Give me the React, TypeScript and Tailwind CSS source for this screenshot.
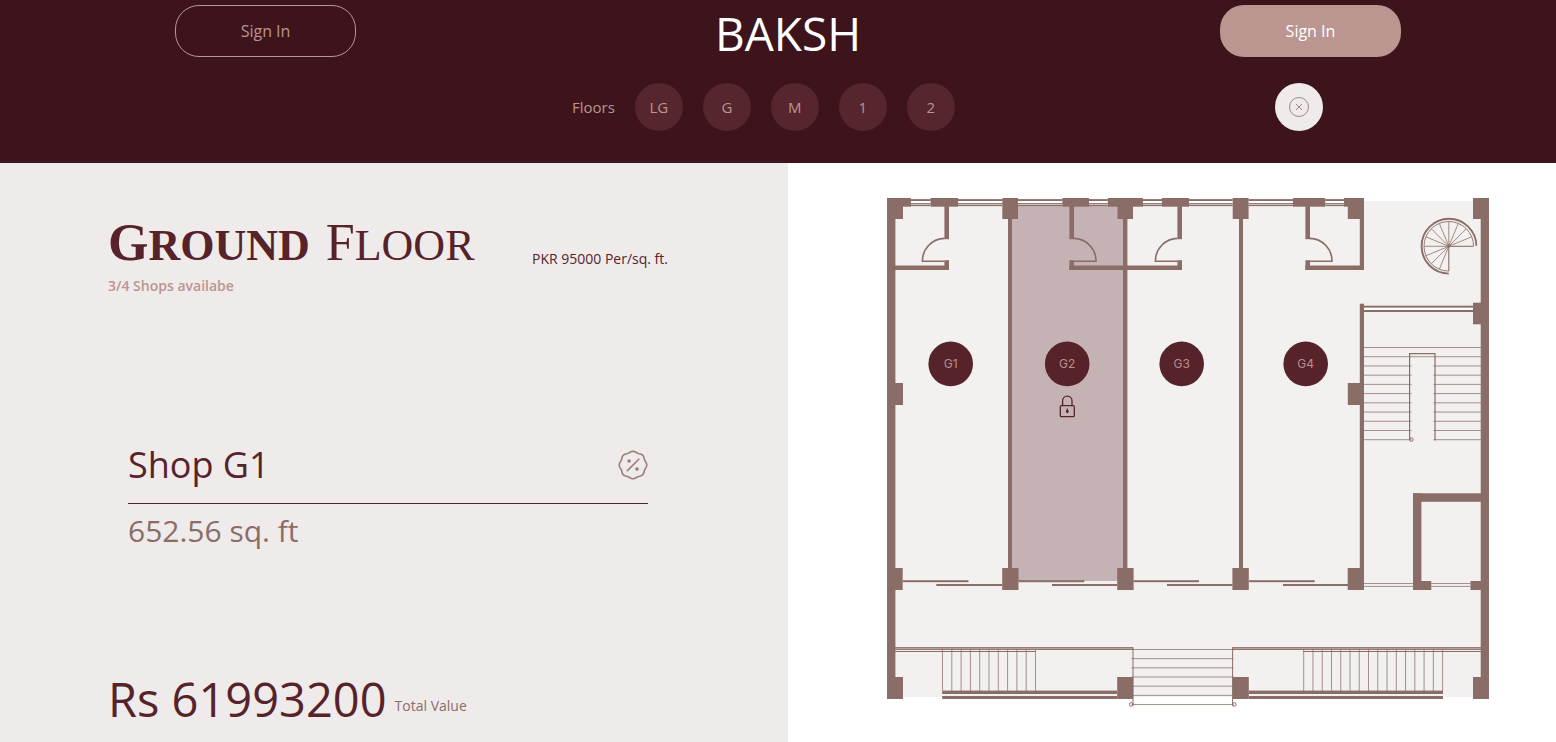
import React from "react";

const WALL = "#8b6d68";

type Box = [x1: number, y1: number, x2: number, y2: number];

const walls: Box[] = [
  // outer walls
  [887, 198, 895.4, 699],
  [1480.7, 198, 1489, 699],
  // top rail
  [887, 198, 911, 206.7],
  [930.5, 198, 958, 206.7],
  [1062.3, 198, 1089, 206.7],
  [1107.7, 198, 1143, 206.7],
  [1162, 198, 1189, 206.7],
  [1293, 198, 1325.3, 206.7],
  [1344, 198, 1364, 206.7],
  // top columns
  [887, 198, 903, 219],
  [1002.3, 198, 1018, 219],
  [1117.5, 198, 1133, 219],
  [1232.7, 198, 1248.6, 219],
  [1347.8, 198, 1364, 219],
  [1473, 198, 1489, 219],
  // shop partitions
  [1008, 219, 1012, 568],
  [1123, 219, 1127.4, 568],
  [1239, 219, 1243, 568],
  [1359.8, 303.7, 1364, 568],
  [1359.8, 206, 1364, 270],
  // washrooms
  [944.4, 206, 949, 239.2],
  [944.4, 260.2, 949, 270],
  [895, 265.5, 949, 270],
  [1069.4, 206, 1074, 239.2],
  [1069.4, 260.2, 1074, 270],
  [1069.4, 265.5, 1182, 270],
  [1177.4, 206, 1182, 239.2],
  [1177.4, 260.2, 1182, 270],
  [1305.4, 206, 1310, 239.2],
  [1305.4, 260.2, 1310, 270],
  [1305.4, 265.5, 1364, 270],
  // middle columns
  [895, 383, 903, 405],
  [1347.8, 383, 1364, 405],
  [1473, 302.7, 1489, 324.3],
  // front columns
  [887, 568, 902.7, 590],
  [1002.2, 568, 1018.5, 590],
  [1117.2, 568, 1133.6, 590],
  [1232.4, 568, 1248.8, 590],
  [1347.7, 568, 1364, 590],
  // lift shaft
  [1413, 493.3, 1421.4, 590],
  [1413, 493.3, 1481, 501.8],
  [1413, 581, 1431.3, 590],
  [1470.5, 581, 1481, 590],
  // porch columns
  [887, 677, 903, 699],
  [1117.2, 677, 1133.2, 699],
  [1232.7, 677, 1248.8, 699],
  [1473, 677, 1489, 699],
  // porch rails
  [942.2, 690.6, 1117.2, 694],
  [942.2, 696, 1117.2, 699],
  [1248.8, 690.6, 1443, 694],
  [1248.8, 696, 1443, 699],
  // landing rails
  [1364, 305.7, 1473, 307.6],
  [1364, 310, 1473, 312],
];

const sliders: Box[] = [
  [903, 580.2, 968.5, 582.2],
  [936.3, 584, 1002, 586],
  [1018.5, 580.2, 1084.3, 582.2],
  [1052, 584, 1117, 586],
  [1133.7, 580.2, 1199, 582.2],
  [1167, 584, 1232.5, 586],
  [1249, 580.2, 1314.7, 582.2],
  [1283, 584, 1348, 586],
];

const windows: [number, number][] = [
  [911, 930.5],
  [958, 1002.3],
  [1018, 1062.3],
  [1089, 1107.7],
  [1143, 1162],
  [1189, 1232.7],
  [1248.6, 1293],
  [1325.3, 1344],
];

const shops = [
  { id: "G1", x: 950.7 },
  { id: "G2", x: 1067.2 },
  { id: "G3", x: 1181.7 },
  { id: "G4", x: 1305.7 },
];

const range = (n: number) => Array.from({ length: n }, (_, i) => i);

function Rects({ boxes }: { boxes: Box[] }) {
  return (
    <>
      {boxes.map(([x1, y1, x2, y2], i) => (
        <rect key={i} x={x1} y={y1} width={x2 - x1} height={y2 - y1} />
      ))}
    </>
  );
}

function Door({ hinge, side }: { hinge: number; side: 1 | -1 }) {
  const end = hinge + side * 22.2;
  return (
    <path
      d={`M${hinge} 238.4A22.6 22.6 0 0 ${side === 1 ? 1 : 0} ${end} 261.3H${hinge}`}
      fill="none"
      stroke={WALL}
      strokeWidth="1.6"
    />
  );
}

function SpiralStair() {
  const cx = 1448.8;
  const cy = 246.3;
  return (
    <g fill="none" stroke={WALL}>
      <path d={`M${cx + 27.6} ${cy - 0.5}A27.4 27.4 0 1 0 ${cx} ${cy + 27.3}`} strokeWidth="1.9" />
      <path d={`M${cx + 24.8} ${cy}A24.8 24.8 0 1 0 ${cx} ${cy + 24.8}`} strokeWidth="0.9" />
      {range(13).map((i) => {
        const a = (i * 22.5 * Math.PI) / 180;
        return (
          <line
            key={i}
            x1={cx}
            y1={cy}
            x2={cx + 24.6 * Math.cos(a)}
            y2={cy - 24.6 * Math.sin(a)}
            strokeWidth={i === 0 || i === 12 ? 1.1 : 0.8}
          />
        );
      })}
      <circle cx={cx} cy={cy} r="1" fill={WALL} />
    </g>
  );
}

function FloorPlan() {
  return (
    <svg viewBox="887 198 602 510" className="block w-full" role="img" aria-label="Ground floor plan">
      <rect x="891" y="201" width="594" height="496" fill="#f3f1f0" />
      <rect x="1012" y="205" width="111" height="376" fill="#c5b2b4" />
      <rect x="1364" y="307" width="109" height="3.5" fill="#fff" />
      {windows.map(([a, b]) => (
        <g key={a}>
          <rect x={a} y="198" width={b - a} height="8" fill="#fff" />
          <rect x={a} y="199.1" width={b - a} height="1.9" fill={WALL} />
          <rect x={a} y="203.1" width={b - a} height="1.2" fill={WALL} />
          <rect x={a} y="204.8" width={b - a} height="1.3" fill={WALL} />
        </g>
      ))}
      <g fill={WALL}>
        <Rects boxes={walls} />
        <Rects boxes={sliders} />
      </g>
      <Door hinge={944.6} side={-1} />
      <Door hinge={1073.8} side={1} />
      <Door hinge={1177.6} side={-1} />
      <Door hinge={1309.8} side={1} />
      <SpiralStair />

      <g fill="none" stroke={WALL} strokeWidth="0.75">
        {range(11).map((i) => {
          const y = 347.5 + i * 9.22;
          return i < 2 ? (
            <path key={i} d={`M1364 ${y}H1481`} />
          ) : (
            <path key={i} d={`M1364 ${y}H1411.5M1433.4 ${y}H1481`} />
          );
        })}
        <path d="M1409.6 440V353.6H1435V440.5" strokeWidth="1.2" />
        <circle cx="1411.4" cy="439.6" r="1.8" strokeWidth="1" />
        <path d="M1364 583.5H1413M1364 586.4H1413M1431.3 583.5H1470.5M1431.3 586.4H1470.5" />
        {range(11).map((i) => (
          <path key={i} d={`M${942.5 + i * 9.3} 649V691`} />
        ))}
        {range(16).map((i) => (
          <path key={i} d={`M${1303.7 + i * 9.26} 649V691`} />
        ))}
        {range(7).map((i) => (
          <path key={i} d={`M1131.5 ${649.5 + i * 9.17}H1233.6`} />
        ))}
      </g>
      <g fill={WALL} fillOpacity="0.45">
        <rect x="895" y="647.3" width="238" height="2.4" />
        <rect x="1232.5" y="647.3" width="248.5" height="2.4" />
      </g>
      <g fill="none" stroke={WALL} strokeWidth="1">
        <path d="M895 647.7H1133M895 649.4H1133M895 651.5H1035.7" />
        <path d="M1232.5 647.7H1481M1232.5 649.4H1481M1303.4 651.5H1481" />
        <path d="M1133 647.3V706M1232.6 647.3V706" />
        <circle cx="1131.2" cy="704.4" r="1.8" />
        <circle cx="1234.3" cy="704.4" r="1.8" />
      </g>

      {shops.map(({ id, x }) => (
        <g key={id}>
          <circle cx={x} cy="363.9" r="22.3" fill="#56232b" />
          <text
            x={x}
            y="368"
            textAnchor="middle"
            fill="#bb8f8a"
            className="font-['Inter',sans-serif] text-[12px]"
          >
            {id}
          </text>
        </g>
      ))}
      <g fill="none" stroke="#56232b" strokeWidth="1.3">
        <rect x="1060.3" y="405.6" width="14" height="11" rx="1.2" />
        <path d="M1062.6 405.6V400.8A4.7 4.7 0 0 1 1072 400.8V405.6" />
        <path d="M1067.3 408.6V413" strokeWidth="1.2" />
        <circle cx="1067.3" cy="411.4" r="0.8" fill="#56232b" />
      </g>
    </svg>
  );
}

function DiscountIcon() {
  const steps = 96;
  const points = range(steps)
    .map((i) => {
      const a = (i / steps) * 2 * Math.PI;
      const r = 13.2 + 0.55 * Math.cos(8 * a);
      return `${(15 + r * Math.sin(a)).toFixed(2)},${(15 - r * Math.cos(a)).toFixed(2)}`;
    })
    .join(" ");
  return (
    <svg
      viewBox="0 0 30 30"
      className="size-[30px] opacity-85"
      fill="none"
      stroke={WALL}
      strokeWidth="1.6"
      strokeLinecap="round"
      aria-hidden="true"
    >
      <polygon points={points} strokeLinejoin="round" />
      <path d="M9.4 20.6L20.8 9.2" />
      <circle cx="11.1" cy="11" r="1" fill={WALL} />
      <circle cx="19" cy="19.1" r="1" fill={WALL} />
    </svg>
  );
}

export default function App() {
  return (
    <div className="flex min-h-screen flex-col bg-white font-['Open_Sans',sans-serif]">
      <header className="bg-[#3d141b] pt-[5px] pb-8">
        <div className="flex items-center justify-between pr-[155px] pl-[175px]">
          <button className="h-13 w-[181px] rounded-3xl border border-[#bb9590] text-base text-[#bb9590]">
            Sign In
          </button>
          <h1 className="pt-1 text-[46px] leading-[48px] text-white">BAKSH</h1>
          <button className="h-13 w-[181px] rounded-3xl bg-[#bb9590] text-base text-white">Sign In</button>
        </div>
        <div className="mt-[26px] flex items-center justify-between pr-[233px] pl-[572px]">
          <nav className="flex items-center gap-5 text-[15px] text-[#bb9590]" aria-label="Floors">
            <span>Floors</span>
            {["LG", "G", "M", "1", "2"].map((floor) => (
              <button key={floor} className="size-12 rounded-full bg-[#56252e]">
                {floor}
              </button>
            ))}
          </nav>
          <button aria-label="Close" className="flex size-12 items-center justify-center rounded-full bg-[#efebea]">
            <svg viewBox="0 0 20 20" className="size-5" fill="none" stroke={WALL} strokeWidth="0.8" aria-hidden="true">
              <circle cx="10" cy="10" r="9.5" />
              <path d="M7 7L13 13M13 7L7 13" />
            </svg>
          </button>
        </div>
      </header>

      <main className="grid flex-1 grid-cols-[788fr_768fr]">
        <section className="bg-[#efebea] pt-[53px] pl-27 text-[#56232b]">
          <div className="w-[560px]">
            <div className="flex items-end justify-between">
              <h2 className="flex gap-4 font-['Liberation_Serif',serif] text-[44px] leading-[54px] uppercase">
                <span className="block font-bold first-letter:text-[52px]">Ground</span>
                <span className="block first-letter:text-[52px]">Floor</span>
              </h2>
              <p className="text-[14px] leading-7">PKR 95000 Per/sq. ft.</p>
            </div>
            <p className="mt-[3px] text-[14px] leading-5 font-semibold text-[#bb9590]">3/4 Shops availabe</p>

            <div className="mt-[139px] px-5">
              <div className="flex items-center justify-between border-b border-[#56232b] pb-2">
                <h3 className="text-[36px] leading-[60px]">Shop G1</h3>
                <DiscountIcon />
              </div>
              <p className="text-[30px] leading-[54px] text-[#8b6d68]">652.56 sq. ft</p>
            </div>

            <div className="mt-[108px] flex items-end gap-2">
              <p className="text-[47px] leading-[66px]">Rs 61993200</p>
              <p className="text-[14px] leading-[52px] text-[#8b6d68]">Total Value</p>
            </div>
          </div>
        </section>
        <section className="pt-[35px] pr-[67px] pl-[99px]">
          <FloorPlan />
        </section>
      </main>
    </div>
  );
}
